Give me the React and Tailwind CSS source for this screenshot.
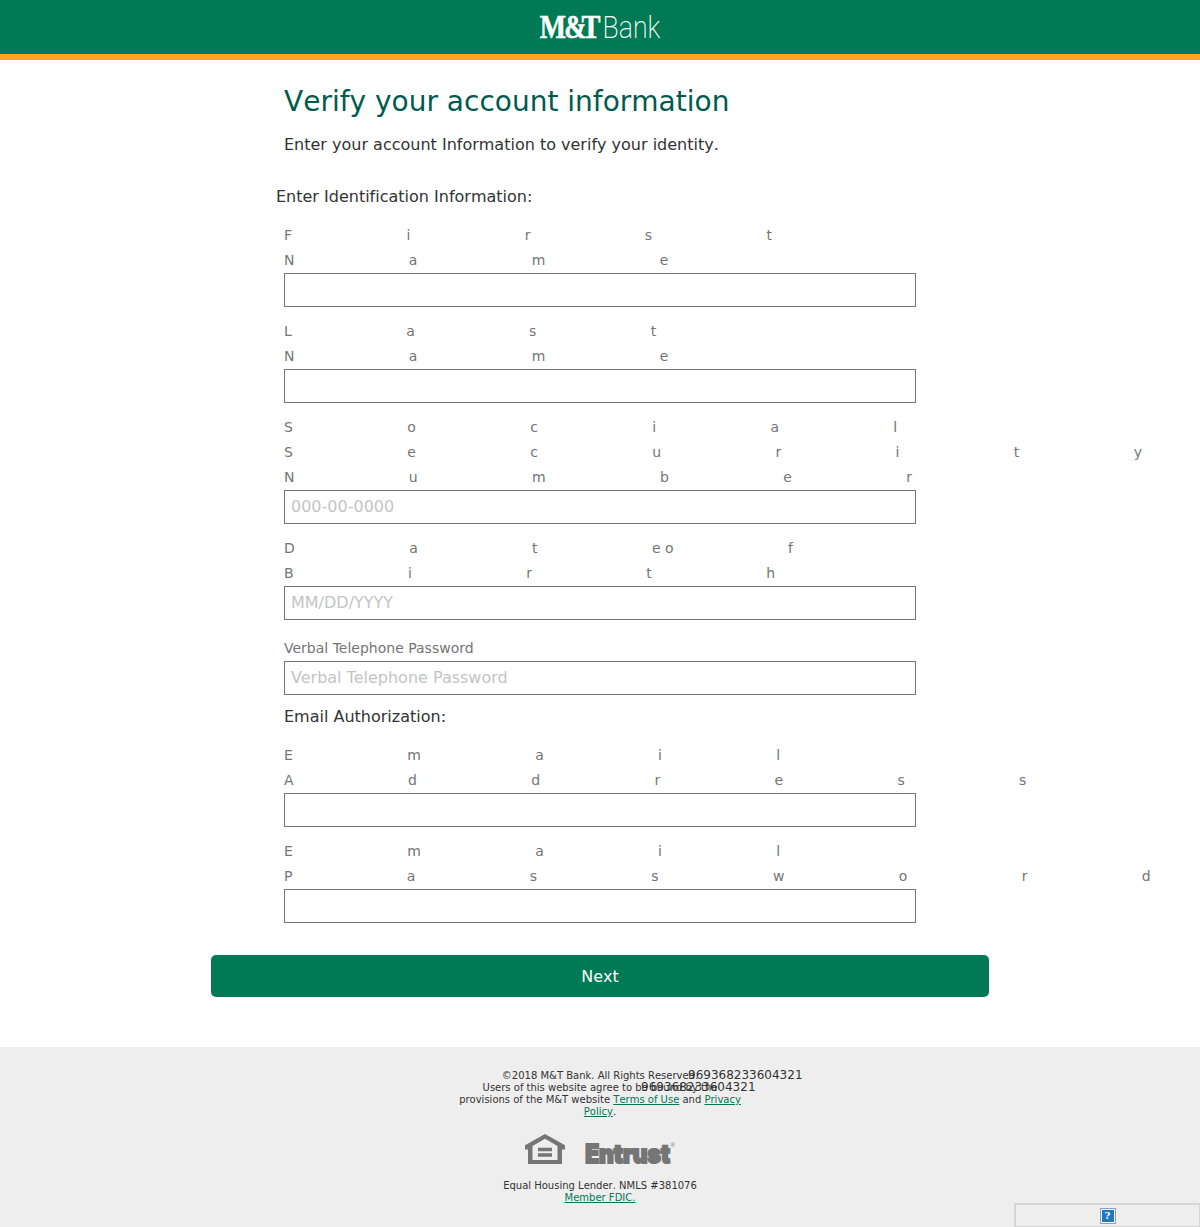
const BOX = "h-[34px] w-full border border-[#757575] bg-white px-1.5 text-base leading-8 text-[#c4c4c4] [font-kerning:normal]";

// Letters spaced far apart; the plain part keeps normal spacing.
function Line({ wide, plain, rest }) {
  return (
    <div className="h-[25px] whitespace-nowrap">
      <span className="tracking-[114.35px]">{wide}</span>
      {plain && <span className="whitespace-pre [font-kerning:normal]">{plain}</span>}
      {rest && <span className="tracking-[114.35px]">{rest}</span>}
    </div>
  );
}

function Field({ lines, placeholder }) {
  return (
    <div className="mb-3">
      <div className="text-sm leading-[25px] text-[#757575]">
        {lines.map((line, i) => (
          <Line key={i} {...line} />
        ))}
      </div>
      <div className={BOX}>{placeholder}</div>
    </div>
  );
}

function Logo() {
  return (
    <svg className="overflow-visible" width="122" height="30" viewBox="0 0 122 30" fill="#fff" role="img" aria-label="M&T Bank">
      <g fontFamily="Liberation Serif" fontWeight="700" fontSize="33.5" stroke="#fff" strokeWidth="0.5">
        <text transform="translate(0.8 25.6) scale(0.83 1)">M</text>
        <text transform="translate(25.2 25.6) scale(0.79 1)">&amp;</text>
        <text transform="translate(42.5 25.6) scale(0.85 1)">T</text>
      </g>
      <text x="63.6" y="25.6" fontFamily="Roboto" fontWeight="200" fontSize="30.5" textLength="57.8" lengthAdjust="spacingAndGlyphs">Bank</text>
    </svg>
  );
}

function HouseIcon() {
  return (
    <svg width="40" height="31" viewBox="0 0 40 31" fill="#757575">
      <path fillRule="evenodd" d="M20 0 40 11.3V15.5H37V30H3V15.5H0V11.3ZM20 4.7 7.5 12V26H32.5V12Z" />
      <path d="M13 13.8H27V17.3H13ZM13 19.3H27V22.8H13Z" />
    </svg>
  );
}

function Entrust() {
  return (
    <svg className="overflow-visible" width="91" height="26" viewBox="0 0 91 26" fill="#757575">
      <text x="0.2" y="20.8" fontFamily="Inter" fontWeight="900" fontSize="26" stroke="#757575" strokeWidth="2" textLength="84.8" lengthAdjust="spacingAndGlyphs">Entrust</text>
      <text x="85.5" y="5" fontFamily="Liberation Sans" fontSize="6">®</text>
    </svg>
  );
}

export default function App() {
  const link = "text-[#007856] underline";
  return (
    <div className="relative h-[1227px] overflow-hidden bg-white font-['DejaVu_Sans',sans-serif] text-[#333] [font-kerning:none] [font-variant-ligatures:none]">
      <header className="flex h-[60px] justify-center border-b-6 border-[#faa61f] bg-[#007a55] pt-3">
        <Logo />
      </header>
      <main className="mx-auto w-[632px]">
        <h1 className="pt-[23px] text-[28px] leading-[38px] text-[#005a50]">Verify your account information</h1>
        <p className="mt-3 text-base leading-6">Enter your account Information to verify your identity.</p>
        <h2 className="-ml-2 mt-7 mb-3.5 text-base leading-6">Enter Identification Information:</h2>
        <Field lines={[{ wide: "First" }, { wide: "Name" }]} />
        <Field lines={[{ wide: "Last" }, { wide: "Name" }]} />
        <Field lines={[{ wide: "Social" }, { wide: "Security" }, { wide: "Number" }]} placeholder="000-00-0000" />
        <Field lines={[{ wide: "Dat", plain: "e ", rest: "of" }, { wide: "Birth" }]} placeholder="MM/DD/YYYY" />
        <div className="pt-1">
          <Field lines={[{ plain: "Verbal Telephone Password" }]} placeholder="Verbal Telephone Password" />
        </div>
        <h2 className="-mt-0.5 mb-3.5 text-base leading-6">Email Authorization:</h2>
        <Field lines={[{ wide: "Email" }, { wide: "Address" }]} />
        <Field lines={[{ wide: "Email" }, { wide: "Password" }]} />
      </main>
      <div className="mx-auto mt-8 h-[42px] w-[778px] rounded-[5px] bg-[#007a55] text-center text-base leading-[44px] text-white">Next</div>
      <footer className="mt-[50px] h-[180px] bg-[#eee] pt-[23px] text-center text-[10px] leading-3">
        <div className="relative mx-auto w-[300px]">
          <p>©2018 M&amp;T Bank. All Rights Reserved.</p>
          <p>Users of this website agree to be bound by the</p>
          <p>provisions of the M&amp;T website <span className={link}>Terms of Use</span> and <span className={link}>Privacy</span></p>
          <p><span className={link}>Policy</span>.</p>
          <span className="absolute -top-px left-[238px] text-xs leading-3">969368233604321</span>
          <span className="absolute top-[11px] left-[191px] text-xs leading-3">969368233604321</span>
        </div>
        <div className="mx-auto mt-4 flex w-[150px] justify-between">
          <HouseIcon />
          <div className="-mr-[1px] mt-2">
            <Entrust />
          </div>
        </div>
        <div className="mt-3">
          <p>Equal Housing Lender. NMLS #381076</p>
          <p><span className={link}>Member FDIC.</span></p>
        </div>
      </footer>
      <div className="absolute right-0 bottom-0 flex h-6 w-[186px] justify-center border-2 border-r border-b border-[#d5d5d5] pt-[3px]">
        <div className="flex h-4 w-4 items-center justify-center border border-[#7da2d6] bg-white">
          <div className="h-3 w-3 bg-[#2277bd] text-center font-['DejaVu_Serif'] text-[10px] leading-3 font-bold text-white">?</div>
        </div>
      </div>
    </div>
  );
}
